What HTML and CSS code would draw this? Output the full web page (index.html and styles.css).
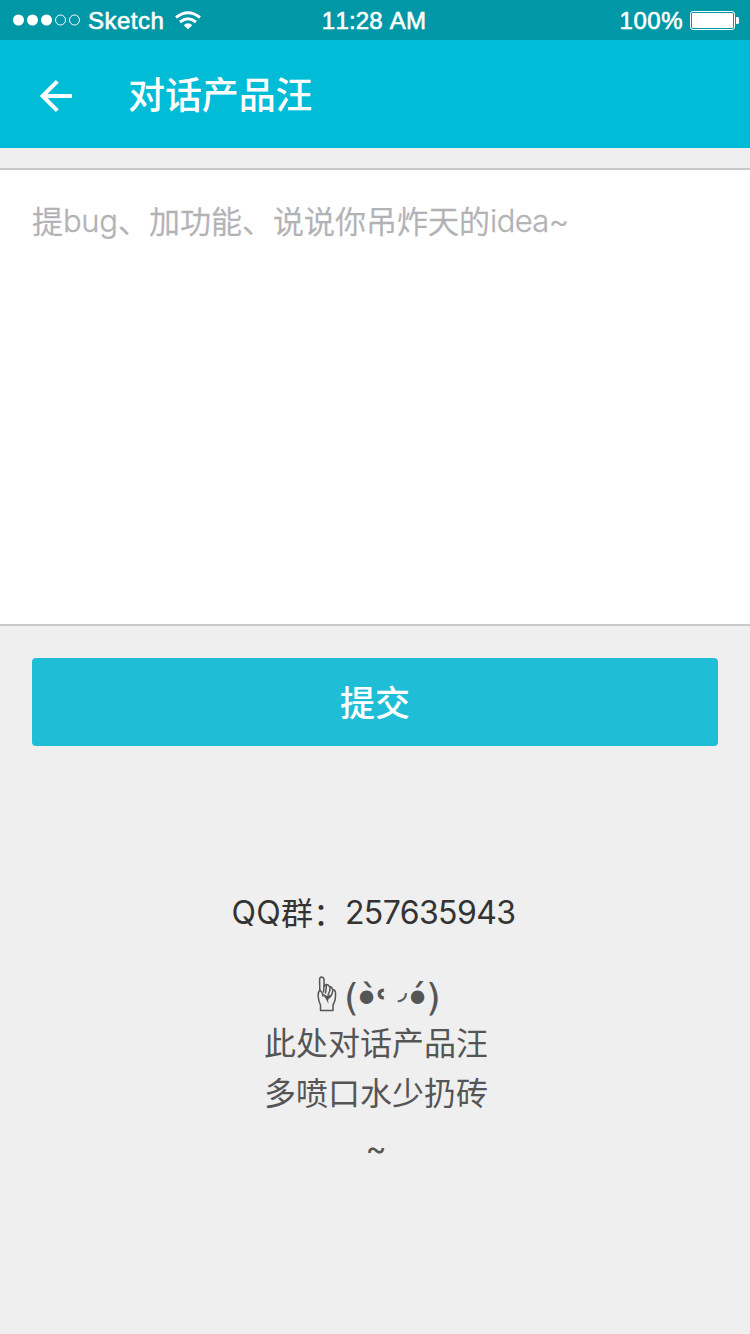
FILE: index.html
```html
<!DOCTYPE html>
<html lang="zh-CN">
<head>
<meta charset="utf-8">
<title>对话产品汪</title>
<link rel="stylesheet" href="styles.css">
</head>
<body>
<div class="screen">
  <div class="status">
    <div class="status-left">
      <svg class="signal" width="67" height="12" viewBox="0 0 67 12"><g fill="#fff"><circle cx="5.5" cy="6" r="5.5"/><circle cx="19.5" cy="6" r="5.5"/><circle cx="33.5" cy="6" r="5.5"/></g><g fill="none" stroke="#fff"><circle cx="47.5" cy="6" r="5"/><circle cx="61.5" cy="6" r="5"/></g></svg>
      <span class="carrier">Sketch</span>
      <svg class="wifi" width="26" height="19" viewBox="0 0 26 19"><g fill="none" stroke="#fff" stroke-width="3"><path d="M1 6.500Q13-3 25 6.500"/><path d="M5 11Q13 4.500 21 11"/></g><path fill="#fff" d="M8.700 14.200Q13 10.400 17.300 14.200L13 18.200Z"/></svg>
    </div>
    <div class="clock">11:28 AM</div>
    <div class="status-right">
      <span class="percent">100%</span>
      <svg width="49" height="19" viewBox="0 0 49 19"><rect x=".5" y=".5" width="44" height="18" rx="2.5" fill="none" stroke="#fff"/><rect x="2" y="2" width="41" height="15" rx="1" fill="#fff"/><path fill="#fff" d="M46 6h1.5q1.5 0 1.5 1.5v4q0 1.500-1.500 1.500H46z"/></svg>
    </div>
  </div>
  <header class="bar">
    <svg class="back" width="32" height="32" viewBox="0 0 32 32"><path fill="none" stroke="#fff" stroke-width="4" d="M17.300 1.400 2.700 16l14.600 14.600M2.700 16H32"/></svg>
    <h1 class="title">对话产品汪</h1>
  </header>
  <div class="field"><span>提</span><span class="latin bug">bug</span><span>、加功能、说说你吊炸天的</span><span class="latin idea">idea~</span></div>
  <button class="submit">提交</button>
  <footer class="about">
    <div class="group"><span class="qq">QQ</span><span class="qun">群：</span><span class="number">257635943</span></div>
    <div class="face">
      <svg class="hand" width="20" height="36" viewBox="0 0 20 36"><g fill="none" stroke="#555" stroke-width="1.500" stroke-linejoin="round" stroke-linecap="round"><path d="M3.500 34.500h12.500V29q3-5 2.500-12.500-.5-3-3-3-.500-3-3.200-3-.800-2.500-3.300-2L7 10.500V3Q6.500.900 4.600.900 2.600 1 2.600 3.500L2.800 14Q.8 17 1.100 20q.4 5 2.400 9z"/><path d="M2.800 14Q5 15.500 6 20M7 10.500 6.500 16M9.500 9.500 8.500 17M13 11q.5 4-2 8M16 14q-.5 4-3 7"/></g><path fill="#555" d="m5 17 5 3 6-2-5 6 .5 4-2-4z"/></svg>
      <span class="paren">(</span><span class="eye">•</span><span class="accent grave">̀</span><span class="cheek">˓</span><span class="mouth">◞</span><span class="eye">•</span><span class="accent acute">́</span><span class="paren">)</span>
    </div>
    <div class="line">此处对话产品汪</div>
    <div class="line">多喷口水少扔砖</div>
    <div class="tilde">~</div>
  </footer>
</div>
</body>
</html>
```
FILE: styles.css
```css
* { box-sizing: border-box; }
body { margin: 0; background: #efefef; font-family: "Liberation Sans", "Noto Sans CJK SC", sans-serif; }
.screen { width: 750px; height: 1334px; overflow: hidden; background: #efefef; }
.status { height: 40px; padding: 0 11px 0 13px; display: grid; grid-template-columns: 1fr auto 1fr; align-items: center; background: #0097a7; color: #fff; font-size: 24px; line-height: 42px; -webkit-text-stroke: .6px #fff; }
.status svg { display: block; flex: none; margin-top: -2px; }
.status-left, .status-right { display: flex; align-items: center; }
.status-right { justify-content: flex-end; gap: 7px; }
.carrier { margin: 0 11px 0 8px; letter-spacing: .5px; }
.clock { margin-right: 4px; letter-spacing: .2px; font-kerning: none; }
.percent { letter-spacing: .5px; }
.bar { height: 108px; padding: 4px 40px 0; display: flex; align-items: center; gap: 56px; background: #00bcd7; color: #fff; }
.title { margin: -6px 0 0; font: 500 37px/54px "Noto Sans CJK SC", sans-serif; letter-spacing: -.1px; }
.field { height: 458px; margin-top: 20px; padding: 26px 32px; border: solid #c8c7cc; border-width: 2px 0; background: #fff; color: #b2b2b6; font: 350 31px/48px "Noto Sans CJK SC", sans-serif; display: flex; -webkit-text-stroke: .3px #b2b2b6; }
.latin { font-family: Inter, sans-serif; font-weight: 300; padding-top: 1px; }
.bug { width: 55px; letter-spacing: -.3px; }
.idea { letter-spacing: -.6px; }
.submit { display: block; width: 686px; height: 88px; margin: 32px; padding: 0 0 2px; border: 0; border-radius: 4px; background: #20bdd6; color: #fff; font: 500 35px/86px "Noto Sans CJK SC", sans-serif; }
.about { padding-top: 109px; color: #555; text-align: center; }
.group { height: 50px; display: flex; justify-content: center; color: #333; font: 400 32px/48px "Noto Sans CJK SC", sans-serif; padding-right: 3px; }
.qq, .number { font-family: Inter, sans-serif; padding-top: 2px; }
.qq { letter-spacing: .2px; }
.number { letter-spacing: -.6px; }
.face { height: 49px; margin: 30px 0 0 317px; display: flex; font: 38px/61px "DejaVu Sans", sans-serif; text-align: left; }
.face span { flex: none; }
.hand { flex: none; margin: 9px 7px 0 0; }
.paren { width: 14px; }
.eye { width: 17px; font-size: 46px; line-height: 65px; text-indent: -5px; }
.accent { width: 0; font-size: 28px; line-height: 58px; -webkit-text-stroke: .8px #555; }
.grave { text-indent: 1px; }
.acute { text-indent: -1px; }
.cheek { width: 17px; text-indent: 1px; -webkit-text-stroke: 1.1px #555; line-height: 56px; }
.mouth { width: 17px; font-size: 22px; line-height: 49px; text-indent: 6px; -webkit-text-stroke: .6px #555; }
.line { height: 50px; padding-left: 2px; font: 400 32px/50px "Noto Sans CJK SC", sans-serif; }
.tilde { height: 50px; padding-left: 2px; font: 400 32px/65px Inter, sans-serif; }
```
